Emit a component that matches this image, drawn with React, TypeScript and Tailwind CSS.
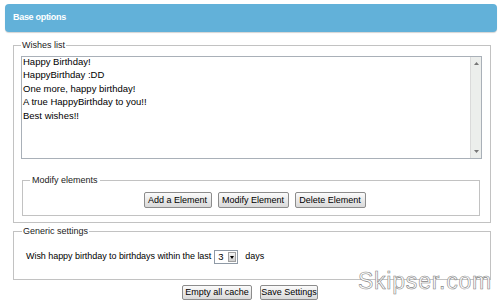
import React from "react";

const Btn = ({ w, h = 16, children }: { w: number; h?: number; children: React.ReactNode }) => (
  <button
    style={{ width: w, height: h }}
    className="flex items-center justify-center border border-[#8c8c8c] rounded-[2px] bg-gradient-to-b from-[#fbfbfb] to-[#d9d9d9] text-[9px] leading-none text-black font-['Liberation_Sans',Arial,sans-serif]"
  >
    {children}
  </button>
);

export default function App() {
  const lines = [
    "Happy Birthday!",
    "HappyBirthday :DD",
    "One more, happy birthday!",
    "A true HappyBirthday to you!!",
    "Best wishes!!",
  ];
  return (
    <div className="relative w-[500px] h-[300px] overflow-hidden bg-white text-black font-['Liberation_Sans',Arial,sans-serif] text-[9px]">
      <div className="pt-[4px]">
        <div className="ml-[5px] w-[492px] h-[28px] rounded-[4px] bg-[#62b1d9] shadow-[0_1px_1px_#d4d4d4] flex items-center pl-[8px]">
          <span className="text-white font-bold text-[9px] tracking-[-0.3px]">Base options</span>
        </div>
      </div>

      <fieldset className="ml-[13px] mt-[7px] w-[478px] border border-[#c2c2c2] pl-[7px] pt-[5px] pb-[6px]">
        <legend className="px-[1px] leading-[12px] text-[#222]">Wishes list</legend>
        <div className="w-[461px] h-[103px] border border-[#a9b0b8] flex bg-white">
          <div className="flex-1 pl-[1px] -mt-[2px] text-[9.5px] leading-[13.4px]">
            {lines.map((l) => (
              <div key={l}>{l}</div>
            ))}
          </div>
          <div className="w-[11px] border-l border-[#dadada] bg-[#eceeec] flex flex-col justify-between items-center py-[5px]">
            <svg width="5" height="3" viewBox="0 0 5 3">
              <path d="M2.5 0 L5 3 L0 3 Z" fill="#777" />
            </svg>
            <svg width="5" height="3" viewBox="0 0 5 3">
              <path d="M0 0 L5 0 L2.5 3 Z" fill="#777" />
            </svg>
          </div>
        </div>

        <fieldset className="mt-[15px] ml-[1px] w-[458px] border border-[#c2c2c2] pl-[7px] pt-[6px] pb-[7px]">
          <legend className="px-[2px] leading-[12px] text-[#222]">Modify elements</legend>
          <div className="flex justify-center gap-[6px]">
            <Btn w={68}>Add a Element</Btn>
            <Btn w={71}>Modify Element</Btn>
            <Btn w={71}>Delete Element</Btn>
          </div>
        </fieldset>
      </fieldset>

      <fieldset className="ml-[13px] mt-[2px] w-[478px] border border-[#c2c2c2] pl-[12px] pt-[13px] pb-[15px]">
        <legend className="-ml-[4px] px-[1px] leading-[12px] text-[#222]">Generic settings</legend>
        <div className="flex items-center h-[14px]">
          <span className="tracking-[-0.05px]">Wish happy birthday to birthdays within the last</span>
          <div className="ml-[3px] w-[24px] h-[14px] border border-[#8f9aa6] flex bg-white">
            <span className="flex-1 pl-[3px] leading-[12px] text-[9.5px]">3</span>
            <div className="w-[8px] my-[1px] mr-[1px] bg-gradient-to-b from-[#f4f4f4] to-[#cfcfcf] border border-[#a0a0a0] flex items-center justify-center">
              <svg width="4" height="3" viewBox="0 0 4 3">
                <path d="M0 0 L4 0 L2 3 Z" fill="#000" />
              </svg>
            </div>
          </div>
          <span className="ml-[7px]">days</span>
        </div>
      </fieldset>

      <div className="mt-[5px] flex justify-center gap-[8px]">
        <Btn w={70} h={15}>Empty all cache</Btn>
        <Btn w={58} h={15}>Save Settings</Btn>
      </div>

      <div className="absolute right-[8px] top-[266px] text-[23px] leading-[30px] text-white [-webkit-text-stroke:0.6px_#858585] tracking-[0.8px] font-['Liberation_Sans',Arial,sans-serif]">
        Skipser.com
      </div>
    </div>
  );
}
